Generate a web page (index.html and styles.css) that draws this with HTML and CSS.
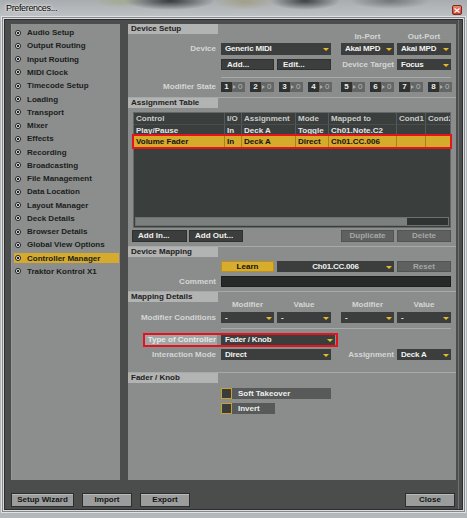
FILE: index.html
```html
<!DOCTYPE html>
<html lang="en">
<head>
    <meta charset="UTF-8">
    <title>Preferences...</title>
    <link rel="stylesheet" href="styles.css">
</head>
<body>
<div class="window">
    <div class="titlebar">
        <span class="title">Preferences...</span>
        <span class="close"><svg width="6" height="5" viewBox="0 0 6 5"><path d="M0.5 0.5 L5.5 4.5 M5.5 0.5 L0.5 4.5" stroke="#fff" stroke-width="1.2"/></svg></span>
    </div>

    <div class="client">
        <div class="body">
            <ul class="sidebar">
                <li><i></i>Audio Setup</li>
                <li><i></i>Output Routing</li>
                <li><i></i>Input Routing</li>
                <li><i></i>MIDI Clock</li>
                <li><i></i>Timecode Setup</li>
                <li><i></i>Loading</li>
                <li><i></i>Transport</li>
                <li><i></i>Mixer</li>
                <li><i></i>Effects</li>
                <li><i></i>Recording</li>
                <li><i></i>Broadcasting</li>
                <li><i></i>File Management</li>
                <li><i></i>Data Location</li>
                <li><i></i>Layout Manager</li>
                <li><i></i>Deck Details</li>
                <li><i></i>Browser Details</li>
                <li><i></i>Global View Options</li>
                <li class="active"><i></i>Controller Manager</li>
                <li><i></i>Traktor Kontrol X1</li>
            </ul>

            <div class="main">
                <!-- Device Setup -->
                <div class="sec sec-device">
                    <div class="head">Device Setup</div>
                    <div class="row caps">
                        <span class="lbl"></span>
                        <span class="c-ab"></span>
                        <span class="c-c cap">In-Port</span>
                        <span class="c-d cap">Out-Port</span>
                    </div>
                    <div class="row r-device">
                        <span class="lbl">Device</span>
                        <span class="dd c-ab">Generic MIDI</span>
                        <span class="dd c-c">Akai MPD</span>
                        <span class="dd c-d">Akai MPD</span>
                    </div>
                    <div class="row r-add">
                        <span class="lbl"></span>
                        <span class="btn c-a">Add...</span>
                        <span class="btn c-b">Edit...</span>
                        <span class="lbl-in c-c">Device Target</span>
                        <span class="dd c-d">Focus</span>
                    </div>
                    <div class="rule"></div>
                    <div class="row r-mods">
                        <span class="lbl">Modifier State</span>
                        <div class="mods">
                            <span class="mod"><b>1</b><em>0</em></span>
                            <span class="mod"><b>2</b><em>0</em></span>
                            <span class="mod"><b>3</b><em>0</em></span>
                            <span class="mod"><b>4</b><em>0</em></span>
                        </div>
                        <div class="mods mods-2">
                            <span class="mod"><b>5</b><em>0</em></span>
                            <span class="mod"><b>6</b><em>0</em></span>
                            <span class="mod"><b>7</b><em>0</em></span>
                            <span class="mod"><b>8</b><em>0</em></span>
                        </div>
                    </div>
                </div>

                <!-- Assignment Table -->
                <div class="sec sec-table">
                    <div class="head">Assignment Table</div>
                    <div class="table">
                        <div class="tr thead">
                            <span>Control</span><span>I/O</span><span>Assignment</span><span>Mode</span><span>Mapped to</span><span>Cond1</span><span>Cond2</span>
                        </div>
                        <div class="tr">
                            <span>Play/Pause</span><span>In</span><span>Deck A</span><span>Toggle</span><span>Ch01.Note.C2</span><span></span><span></span>
                        </div>
                        <div class="tr sel">
                            <span>Volume Fader</span><span>In</span><span>Deck A</span><span>Direct</span><span>Ch01.CC.006</span><span></span><span></span>
                        </div>
                        <div class="hscroll"><div class="thumb"></div></div>
                    </div>
                    <div class="row r-tbtns">
                        <span class="btn b-addin">Add In...</span>
                        <span class="btn b-addout">Add Out...</span>
                        <span class="btn off b-dup">Duplicate</span>
                        <span class="btn off b-del">Delete</span>
                    </div>
                </div>

                <!-- Device Mapping -->
                <div class="sec sec-mapping">
                    <div class="head">Device Mapping</div>
                    <div class="row r-learn">
                        <span class="lbl"></span>
                        <span class="btn learn c-a">Learn</span>
                        <span class="dd center c-bc">Ch01.CC.006</span>
                        <span class="btn off c-d">Reset</span>
                    </div>
                    <div class="row r-comment">
                        <span class="lbl">Comment</span>
                        <span class="input c-all"></span>
                    </div>
                </div>

                <!-- Mapping Details -->
                <div class="sec sec-details">
                    <div class="head">Mapping Details</div>
                    <div class="row caps">
                        <span class="lbl"></span>
                        <span class="c-a cap">Modifier</span>
                        <span class="c-b cap">Value</span>
                        <span class="c-c cap">Modifier</span>
                        <span class="c-d cap">Value</span>
                    </div>
                    <div class="row r-conds">
                        <span class="lbl">Modifier Conditions</span>
                        <span class="dd c-a">-</span>
                        <span class="dd c-b">-</span>
                        <span class="dd c-c">-</span>
                        <span class="dd c-d">-</span>
                    </div>
                    <div class="rule"></div>
                    <div class="row r-type">
                        <div class="hl">
                            <span class="tlabel">Type of Controller</span>
                            <span class="dd c-ab">Fader / Knob</span>
                        </div>
                    </div>
                    <div class="row r-mode">
                        <span class="lbl">Interaction Mode</span>
                        <span class="dd c-ab">Direct</span>
                        <span class="lbl-in c-c">Assignment</span>
                        <span class="dd c-d">Deck A</span>
                    </div>
                </div>

                <!-- Fader / Knob -->
                <div class="sec sec-fader">
                    <div class="head">Fader / Knob</div>
                    <div class="row chk r-soft">
                        <span class="box"></span>
                        <span class="clabel w-soft">Soft Takeover</span>
                    </div>
                    <div class="row chk r-invert">
                        <span class="box"></span>
                        <span class="clabel w-invert">Invert</span>
                    </div>
                </div>
            </div>
        </div>

        <div class="footer">
            <span class="fbtn f-wizard">Setup Wizard</span>
            <span class="fbtn f-import">Import</span>
            <span class="fbtn f-export">Export</span>
            <span class="fbtn f-close">Close</span>
        </div>
    </div>
</div>
</body>
</html>
```

FILE: styles.css
```css
body {
    margin: 0;
    font-family: "Liberation Sans", Arial, sans-serif;
    font-size: 8px;
    font-weight: bold;
    background-color: #b4b7b9;
}
.window {
    width: 467px;
    height: 518px;
    box-sizing: border-box;
    padding: 0 5px 9px 5px;
    display: flex;
    flex-direction: column;
    background-color: #b4b7b9;
}
.titlebar {
    height: 20px;
    margin: 0 -5px;
    padding: 0 5px 4px 6px;
    box-sizing: border-box;
    display: flex;
    align-items: center;
    justify-content: space-between;
    background:
        radial-gradient(ellipse 45px 9px at 170px 1px, rgba(35,38,40,0.85), transparent),
        radial-gradient(ellipse 30px 8px at 245px 2px, rgba(150,140,90,0.45), transparent),
        radial-gradient(ellipse 35px 9px at 305px 1px, rgba(35,38,40,0.8), transparent),
        radial-gradient(ellipse 40px 8px at 390px 1px, rgba(70,72,75,0.55), transparent),
        radial-gradient(ellipse 25px 6px at 120px 2px, rgba(150,160,90,0.35), transparent),
        linear-gradient(#a9adaf, #c3c6c8);
}
.title {
    font-family: "Liberation Sans", Arial, sans-serif;
    font-size: 9px;
    font-weight: normal;
    letter-spacing: -0.35px;
    color: #000;
    text-shadow: 0 0 4px #fff, 0 0 2px #fff;
}
.close {
    width: 10px;
    height: 10px;
    box-sizing: border-box;
    margin-top: 4px;
    border: 1px solid #7e2a1e;
    border-radius: 2px;
    background: linear-gradient(#eb8a72, #c8402e);
    display: flex;
    align-items: center;
    justify-content: center;
}
.client {
    flex: 1;
    display: flex;
    flex-direction: column;
    padding: 4px 6px 0 6px;
    background-color: #4a4d4c;
    box-shadow: inset -3px 0 0 #4a4d4c, inset -4px 0 0 #6f7271, 0 0 0 1px #2b2d2e, 0 0 0 2px #d9dbdc, 0 0 0 3px #85888a, 0 0 0 4px #dfe1e2;
}
.body {
    height: 456px;
    display: flex;
    gap: 8px;
}

/* sidebar */
.sidebar {
    width: 109px;
    margin: 0;
    padding: 3.7px 1px 0 2px;
    box-sizing: border-box;
    list-style-type: none;
    background-color: #8b8e8d;
    border-left: 1px solid #959897;
}
.sidebar li {
    height: 10px;
    margin-bottom: 3.28px;
    padding-left: 1px;
    display: flex;
    align-items: center;
    color: #1b1d1c;
    white-space: nowrap;
}
.sidebar li i {
    width: 6px;
    height: 6px;
    box-sizing: border-box;
    margin-right: 6px;
    border-radius: 50%;
    border: 1px solid #1e201f;
    background: radial-gradient(circle, #1e201f 0 1px, #ececec 1.3px);
}
.sidebar li.active {
    background-color: #d6ab2d;
}

/* main panel */
.main {
    width: 328px;
    display: flex;
    flex-direction: column;
    background-color: #8a8d8c;
}
.sec {
    display: flex;
    flex-direction: column;
}
.sec + .sec {
    border-top: 1px solid #a6a9a8;
}
.head {
    width: 90px;
    height: 10px;
    line-height: 10px;
    padding-left: 3px;
    box-sizing: border-box;
    background-color: #b2b4b3;
    color: #1f2120;
}
.sec-device { padding-bottom: 5px; }
.sec-table { padding-bottom: 4px; }
.sec-mapping { padding-bottom: 4px; }
.sec-details { padding-bottom: 12px; }
.sec-fader { flex: 1; }

.row {
    display: flex;
    align-items: center;
    height: 11px;
    line-height: 11px;
}
.row > * {
    height: 100%;
    box-sizing: border-box;
    white-space: nowrap;
}
.lbl {
    width: 88px;
    margin-right: 5px;
    text-align: right;
    color: #d4d6d5;
}
.lbl-in {
    text-align: right;
    color: #d4d6d5;
}
.cap {
    text-align: center;
    color: #d4d6d5;
}
.c-a { width: 53px; }
.c-b { width: 54px; margin-left: 3px; }
.c-c { width: 53px; margin-left: 10px; }
.c-d { width: 54px; margin-left: 3px; }
.c-ab { width: 110px; }
.c-bc { width: 117px; margin-left: 3px; }
.c-all { width: 230px; }

.caps { height: 8px; line-height: 8px; margin-top: -1px; }
.r-device { height: 12px; line-height: 12px; margin-top: 2px; }
.r-add { margin-top: 4px; }
.r-mods { height: 10px; line-height: 10px; margin-top: 4px; }
.r-conds { margin-top: 3px; }
.r-learn { margin-top: 4px; }
.r-comment { margin-top: 4px; }
.r-type { height: 14px; margin-top: 4px; }
.r-mode { margin-top: 2px; }
.r-soft { margin-top: 5px; }
.r-invert { margin-top: 4px; }

.rule {
    height: 1px;
    width: 230px;
    margin: 7px 0 0 93px;
    background-color: #a8abaa;
}
.sec-details .rule { margin-top: 5px; }

.dd {
    position: relative;
    padding-left: 4px;
    background-color: #3b3e3d;
    color: #f2f2f2;
    letter-spacing: -0.2px;
    overflow: hidden;
}
.dd::after {
    content: "";
    position: absolute;
    right: 2px;
    top: 50%;
    margin-top: -1px;
    border-left: 3px solid transparent;
    border-right: 3px solid transparent;
    border-top: 3px solid #e9bb2b;
}
.dd.center {
    text-align: center;
    padding-left: 0;
}

.btn {
    padding-left: 5px;
    background-color: #3b3e3d;
    border: 1px solid #2e3130;
    color: #f0f0f0;
    line-height: 9px;
}
.btn.off {
    padding-left: 0;
    text-align: center;
    background-color: #5e6160;
    border-color: #515453;
    color: #a5a8a7;
}
.btn.learn {
    padding-left: 0;
    text-align: center;
    background-color: #d8ad2d;
    border-color: #b8921f;
    color: #111;
}

/* modifier state */
.mods {
    width: 111px;
    display: flex;
    gap: 5px;
}
.mods-2 { margin-left: 9px; }
.mod {
    width: 24px;
    flex: none;
    display: flex;
    background-color: #646766;
}
.mod b {
    width: 11px;
    text-align: center;
    background-color: #2f3231;
    color: #eeeeee;
}
.mod em {
    flex: 1;
    font-style: normal;
    font-weight: normal;
    color: #b5b8b7;
    display: flex;
    align-items: center;
    gap: 2px;
    padding-left: 1px;
}
.mod em::before {
    content: "";
    border-top: 2.5px solid transparent;
    border-bottom: 2.5px solid transparent;
    border-left: 3px solid #a9acab;
}

/* assignment table */
.table {
    width: 318px;
    height: 116px;
    margin: 4px 0 0 5px;
    box-sizing: border-box;
    border: 1px solid #636766;
    background-color: #3a3e3d;
    display: flex;
    flex-direction: column;
}
.tr {
    display: grid;
    grid-template-columns: 90px 17px 54px 33px 68px 29px 1fr;
    height: 11px;
    line-height: 11px;
    color: #e4e4e4;
}
.tr span {
    padding-left: 2px;
    border-left: 1px solid #565a59;
    white-space: nowrap;
    overflow: hidden;
}
.tr span:first-child {
    border-left: none;
}
.thead {
    color: #c9cccb;
    border-bottom: 1px solid #4a4e4d;
}
.tr.sel {
    background-color: #d6aa2b;
    color: #121212;
    outline: 2px solid #e3141e;
}
.tr.sel span {
    border-left-color: #a4821e;
}
.hscroll {
    height: 9px;
    margin: auto 1px 1px 1px;
    box-sizing: border-box;
    border: 1px solid #6d7170;
    background-color: #2f3332;
}
.thumb {
    width: 271px;
    height: 100%;
    background-color: #7b7f7e;
}
.r-tbtns {
    height: 12px;
    margin-top: 2px;
}
.b-addin { width: 55px; margin-left: 4px; }
.b-addout { width: 54px; margin-left: 2px; }
.b-dup { width: 53px; margin-left: 98px; }
.b-del { width: 54px; margin-left: 3px; }
.r-tbtns .btn { line-height: 10px; }

.input {
    background-color: #262928;
    border: 1px solid #1d1f1e;
}

/* type of controller */
.hl {
    margin-left: 15px;
    padding-right: 1px;
    border: 2px solid #e3141e;
    display: flex;
    align-items: center;
    line-height: 10px;
}
.tlabel {
    width: 72px;
    height: 10px;
    padding-right: 1px;
    box-sizing: border-box;
    text-align: right;
    background-color: #a2a5a4;
    color: #e6e8e7;
}
.hl .dd {
    height: 10px;
    margin-left: 4px;
}

/* checkboxes */
.chk {
    margin-left: 93px;
}
.box {
    width: 11px;
    border: 1px solid #c9a229;
    background-color: #393c3b;
}
.clabel {
    padding-left: 6px;
    background-color: #575a59;
    color: #eeeeee;
}
.w-soft { width: 99px; }
.w-invert { width: 43px; }

/* footer */
.footer {
    display: flex;
    height: 14px;
    margin-top: 13px;
}
.fbtn {
    box-sizing: border-box;
    text-align: center;
    line-height: 12px;
    background-color: #9a9d9c;
    border: 1px solid #2b2e2d;
    box-shadow: inset 0 1px 0 #b9bcbb;
    color: #141414;
}
.f-wizard { width: 63px; }
.f-import { width: 50px; margin-left: 8px; }
.f-export { width: 50px; margin-left: 8px; }
.f-close { width: 50px; margin-left: auto; margin-right: 1px; }
```
